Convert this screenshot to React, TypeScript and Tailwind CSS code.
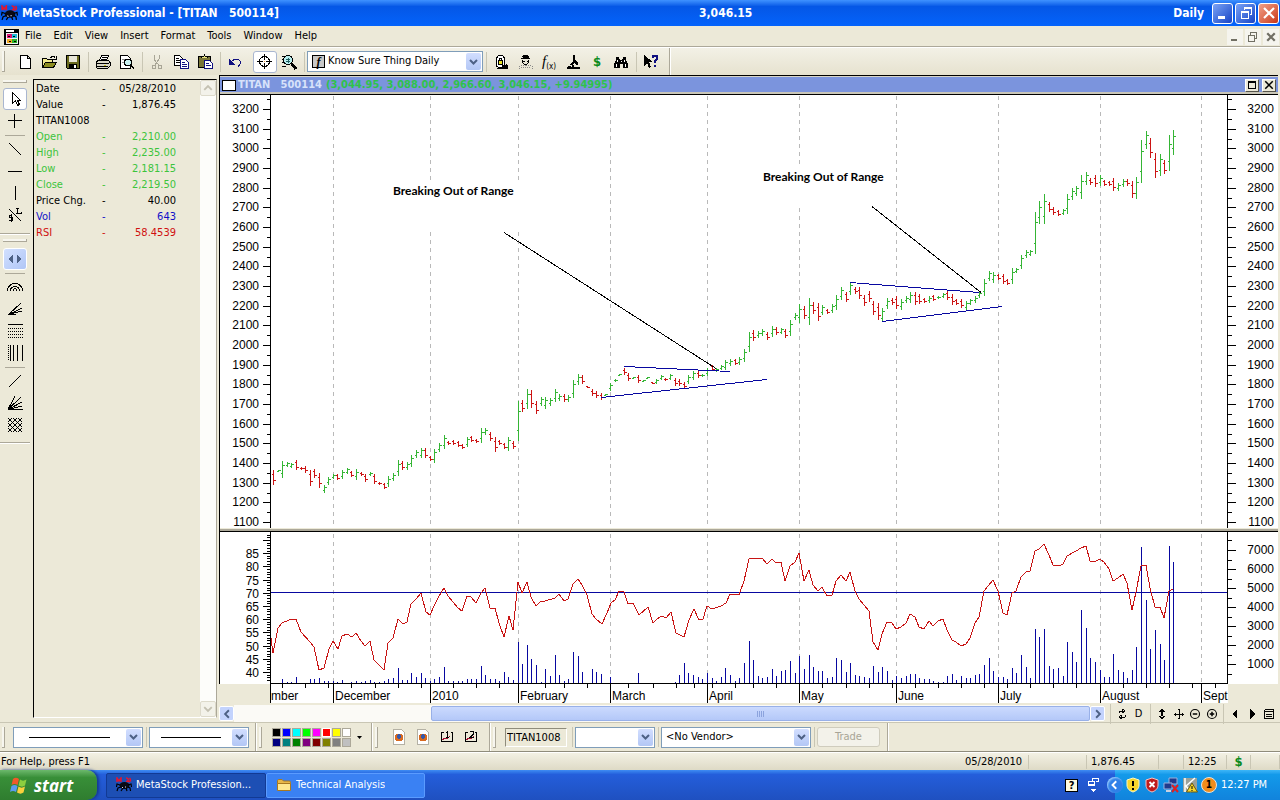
import React from "react";
import clsx from "clsx";

// [x, high, low, up]
const BARS = [
  [273, 470, 484, 0], [278, 470, 471, 1], [282, 461, 477, 1], [287, 462, 466, 1], [291, 463, 467, 1],
  [296, 460, 469, 0], [301, 467, 469, 0], [305, 466, 472, 0], [310, 470, 485, 0], [314, 469, 477, 0],
  [319, 473, 487, 0], [324, 485, 492, 1], [328, 477, 484, 1], [333, 474, 478, 1], [337, 474, 479, 0],
  [342, 470, 478, 1], [347, 468, 473, 1], [351, 471, 476, 0], [356, 469, 479, 1], [361, 472, 475, 0],
  [365, 474, 481, 0], [370, 472, 475, 1], [374, 474, 483, 0], [379, 482, 484, 0], [384, 483, 488, 0],
  [388, 476, 486, 1], [393, 473, 480, 1], [398, 460, 475, 1], [402, 461, 469, 0], [407, 462, 469, 1],
  [411, 455, 466, 1], [416, 450, 457, 1], [421, 448, 457, 1], [425, 448, 457, 0], [430, 456, 460, 0],
  [434, 449, 462, 1], [439, 443, 451, 1], [444, 435, 448, 1], [448, 441, 444, 0], [453, 440, 444, 0],
  [458, 441, 446, 0], [462, 444, 448, 0], [467, 437, 446, 1], [471, 436, 441, 0], [476, 439, 442, 0],
  [481, 428, 442, 1], [485, 428, 434, 1], [490, 432, 440, 0], [495, 437, 451, 0], [499, 440, 444, 0],
  [504, 443, 448, 0], [508, 437, 450, 1], [513, 441, 448, 0], [518, 401, 440, 1], [522, 400, 411, 0],
  [527, 389, 408, 1], [531, 390, 407, 0], [536, 401, 413, 0], [541, 397, 405, 1], [545, 397, 408, 1],
  [550, 398, 405, 1], [555, 389, 401, 1], [559, 394, 400, 1], [564, 394, 401, 0], [568, 395, 401, 1],
  [573, 380, 397, 1], [578, 374, 384, 1], [582, 375, 383, 0], [587, 386, 387, 0], [592, 389, 395, 0],
  [596, 391, 397, 0], [601, 393, 399, 0], [605, 394, 395, 1], [610, 383, 390, 1], [615, 379, 381, 1],
  [619, 374, 375, 1], [624, 368, 374, 0], [628, 373, 380, 0], [633, 377, 378, 1], [638, 375, 382, 0],
  [643, 380, 381, 1], [647, 377, 378, 1], [652, 382, 383, 0], [656, 379, 383, 1], [661, 375, 379, 1],
  [665, 378, 380, 0], [670, 374, 379, 1], [675, 378, 385, 0], [679, 379, 385, 0], [684, 382, 388, 0],
  [688, 375, 383, 1], [693, 371, 379, 1], [698, 371, 377, 0], [702, 374, 376, 1], [707, 368, 375, 1],
  [712, 365, 370, 0], [716, 368, 371, 1], [721, 365, 369, 1], [725, 360, 369, 1], [730, 359, 365, 1],
  [735, 359, 364, 0], [739, 357, 364, 1], [744, 349, 361, 1], [749, 332, 351, 1], [753, 330, 340, 0],
  [758, 331, 337, 1], [762, 329, 335, 1], [767, 332, 339, 0], [772, 326, 336, 1], [776, 327, 334, 0],
  [781, 328, 333, 1], [785, 329, 337, 0], [790, 320, 335, 1], [795, 313, 319, 1], [799, 304, 322, 1],
  [804, 306, 318, 0], [809, 298, 324, 1], [813, 302, 313, 0], [818, 303, 320, 0], [822, 305, 314, 1],
  [827, 309, 313, 0], [832, 304, 312, 1], [836, 295, 309, 1], [841, 287, 299, 1], [846, 292, 301, 0],
  [850, 282, 294, 1], [855, 287, 293, 0], [859, 287, 298, 0], [864, 295, 305, 0], [869, 291, 301, 0],
  [873, 301, 314, 0], [878, 303, 319, 0], [882, 308, 321, 1], [887, 298, 308, 1], [892, 298, 304, 0],
  [896, 296, 308, 0], [901, 299, 309, 1], [906, 296, 302, 1], [910, 292, 302, 1], [915, 292, 304, 0],
  [919, 294, 303, 0], [924, 298, 302, 0], [929, 296, 302, 1], [933, 295, 300, 0], [938, 296, 298, 1],
  [943, 293, 297, 1], [947, 291, 299, 0], [952, 294, 304, 0], [956, 299, 304, 0], [961, 299, 307, 0],
  [966, 301, 309, 1], [970, 299, 304, 1], [975, 296, 302, 1], [979, 291, 297, 1], [984, 279, 295, 1],
  [989, 271, 280, 1], [993, 272, 282, 1], [998, 274, 279, 0], [1003, 274, 283, 0], [1007, 279, 284, 0],
  [1012, 268, 283, 1], [1016, 268, 272, 1], [1021, 255, 268, 1], [1026, 250, 257, 1], [1030, 250, 255, 1],
  [1035, 212, 253, 1], [1039, 201, 223, 1], [1044, 194, 223, 1], [1049, 202, 211, 0], [1053, 207, 214, 0],
  [1058, 210, 215, 0], [1063, 209, 214, 1], [1067, 194, 213, 1], [1072, 188, 199, 1], [1076, 186, 195, 1],
  [1081, 175, 198, 1], [1086, 172, 184, 1], [1090, 178, 184, 0], [1095, 175, 186, 0], [1100, 175, 185, 1],
  [1104, 180, 185, 0], [1109, 181, 185, 0], [1113, 178, 190, 0], [1118, 183, 190, 1], [1123, 179, 186, 1],
  [1127, 179, 185, 0], [1132, 181, 197, 0], [1136, 177, 198, 1], [1141, 140, 182, 1], [1146, 131, 148, 1],
  [1150, 138, 157, 0], [1155, 153, 177, 0], [1160, 154, 175, 1], [1164, 160, 173, 0], [1169, 135, 170, 1],
  [1173, 130, 154, 1],
];

const RSI =
  "271,638 273,653 278,628 282,623 289,620 296,619 301,632 310,642 314,647 319,670 324,668 329,649 333,641 338,649 342,636 347,634 352,637 356,633 361,641 365,646 370,641 374,660 384,670 388,643 393,638 398,619 403,624 407,622 411,604 416,599 421,593 426,612 430,615 435,604 439,596 444,588 448,596 453,602 458,608 462,611 467,596 471,597 476,603 481,593 485,588 490,608 495,608 499,623 504,637 509,616 513,630 518,582 522,593 527,582 531,597 536,606 541,601 545,601 555,598 559,594 564,601 568,599 573,584 578,579 582,585 587,595 592,614 596,619 602,624 607,613 611,603 615,600 619,591 624,592 628,604 633,603 639,615 648,607 653,623 657,619 662,616 666,618 671,612 676,633 684,637 689,620 694,609 699,620 703,619 707,606 712,609 721,606 726,603 730,594 739,595 744,581 749,559 762,558 767,564 772,559 776,563 781,562 785,581 790,566 795,562 799,553 804,581 809,570 813,585 818,591 822,587 827,596 832,595 836,581 841,575 846,581 850,572 855,591 859,599 864,605 869,611 873,642 878,650 882,634 887,622 892,623 896,629 901,627 906,623 910,614 915,617 919,627 924,629 929,621 933,626 938,621 943,619 947,630 952,640 956,642 961,646 966,644 970,638 975,623 979,617 984,591 993,580 998,591 1003,613 1007,615 1012,593 1016,591 1021,577 1026,572 1030,571 1035,551 1039,549 1044,544 1049,555 1053,565 1061,565 1063,564 1067,556 1076,551 1081,548 1086,546 1090,561 1094,562 1100,559 1104,562 1109,569 1113,581 1118,578 1123,574 1127,583 1132,610 1136,592 1141,566 1146,565 1150,588 1155,607 1160,607 1164,618 1169,591 1173,589";

// [x, height]
const VOLUME = [
  [282, 4], [287, 1], [291, 1], [296, 6], [310, 4], [314, 4], [319, 5], [324, 2], [328, 2], [333, 2],
  [337, 1], [342, 3], [351, 1], [356, 2], [361, 1], [365, 2], [370, 3], [374, 1], [379, 1], [384, 2],
  [388, 4], [393, 5], [398, 15], [402, 3], [407, 3], [411, 10], [416, 6], [421, 10], [425, 5], [430, 2],
  [434, 4], [439, 6], [444, 16], [448, 2], [453, 2], [458, 2], [462, 2], [467, 4], [471, 4], [476, 4],
  [481, 17], [485, 8], [490, 4], [495, 4], [499, 2], [504, 11], [508, 6], [513, 3], [518, 41], [522, 19],
  [527, 38], [531, 24], [536, 18], [541, 1], [545, 14], [550, 7], [555, 28], [559, 8], [564, 2], [568, 4],
  [573, 31], [578, 27], [582, 11], [592, 14], [596, 11], [601, 9], [610, 6], [638, 10], [675, 1], [679, 8],
  [684, 20], [688, 10], [693, 8], [698, 6], [702, 4], [707, 10], [712, 5], [716, 2], [721, 6], [725, 15],
  [730, 8], [735, 2], [739, 5], [744, 20], [749, 42], [753, 23], [758, 7], [762, 5], [767, 6], [772, 14],
  [776, 7], [781, 12], [785, 13], [790, 22], [795, 10], [799, 27], [804, 14], [809, 28], [813, 16],
  [818, 12], [822, 12], [827, 5], [832, 6], [836, 25], [841, 23], [846, 11], [850, 20], [855, 8], [859, 7],
  [864, 6], [869, 5], [873, 17], [878, 11], [882, 16], [887, 12], [892, 3], [896, 7], [901, 5], [906, 7],
  [910, 9], [915, 9], [919, 5], [924, 4], [929, 4], [933, 2], [938, 1], [943, 1], [947, 7], [952, 9],
  [956, 3], [961, 7], [966, 5], [970, 5], [975, 8], [979, 9], [984, 18], [989, 25], [993, 12], [998, 6],
  [1003, 6], [1007, 4], [1012, 15], [1016, 10], [1021, 28], [1026, 16], [1030, 5], [1035, 54], [1039, 46],
  [1044, 54], [1049, 17], [1053, 14], [1058, 15], [1063, 7], [1067, 41], [1072, 31], [1076, 21],
  [1081, 73], [1086, 55], [1090, 25], [1095, 21], [1100, 13], [1104, 6], [1109, 6], [1113, 29], [1118, 13],
  [1123, 11], [1127, 5], [1132, 13], [1136, 36], [1141, 136], [1146, 83], [1150, 34], [1155, 53],
  [1160, 39], [1164, 23], [1169, 137], [1173, 121],
];

const MONTHS: [number, string][] = [
  [333, "December"], [430, "2010"], [518, "February"], [610, "March"], [707, "April"],
  [799, "May"], [896, "June"], [998, "July"], [1100, "August"], [1201, "Sept"],
];

const WEEKS = [
  282, 305, 328, 351, 375, 398, 421, 453, 476, 499, 545, 564, 587, 628, 653, 676, 694, 712, 735, 753, 776,
  822, 846, 869, 892, 915, 938, 961, 984, 1007, 1030, 1053, 1076, 1123, 1146, 1169, 1192, 1215,
];

const QUOTES = [
  ["Date", "05/28/2010", "text-black"],
  ["Value", "1,876.45", "text-black"],
  ["TITAN1008", "", "text-black"],
  ["Open", "2,210.00", "text-[#3cc43c]"],
  ["High", "2,235.00", "text-[#3cc43c]"],
  ["Low", "2,181.15", "text-[#3cc43c]"],
  ["Close", "2,219.50", "text-[#3cc43c]"],
  ["Price Chg.", "40.00", "text-black"],
  ["Vol", "643", "text-[#1010c8]"],
  ["RSI", "58.4539", "text-[#d01010]"],
];

const SWATCHES = [
  "bg-[#000000]", "bg-[#0000ff]", "bg-[#00ffff]", "bg-[#00ff00]", "bg-[#ff00ff]", "bg-[#ff0000]", "bg-[#ffff00]", "bg-[#ffffff]",
  "bg-[#000080]", "bg-[#008080]", "bg-[#008000]", "bg-[#800080]", "bg-[#800000]", "bg-[#808000]", "bg-[#808080]", "bg-[#c0c0c0]",
];

const priceY = (price: number) => Math.round(522 - ((price - 1100) * 413) / 2100);
const rsiY = (value: number) => Math.round(672 - (value - 40) * 2.64);
const volY = (value: number) => Math.round(683 - (value * 19) / 1000);

const PRICES = Array.from({ length: 22 }, (_, i) => 1100 + i * 100);

type IconProps = { children: React.ReactNode; size?: number; smooth?: boolean };

const Icon = ({ children, size = 16, smooth }: IconProps) => (
  <svg
    width={size}
    height={size}
    viewBox="0 0 16 16"
    fill="none"
    stroke="#000"
    shapeRendering={smooth ? "auto" : "crispEdges"}
    className="shrink-0"
    aria-hidden="true"
  >
    {children}
  </svg>
);

const ToolButton = ({ label, children, className = "" }: { label: string; children: React.ReactNode; className?: string }) => (
  <button aria-label={label} className={clsx("flex h-[22px] w-6 shrink-0 items-center justify-center rounded-[3px]", className)}>
    {children}
  </button>
);

const Sep = () => (
  <span className="flex h-5 w-[6px] shrink-0 justify-center">
    <span className="w-px bg-[#c9c6b4]" />
  </span>
);

const Grip = () => <span className="h-[21px] w-[3px] shrink-0 border-r border-b border-[#aca899] bg-[#f7f6ef]" />;

const BandEnd = () => <span className="w-[2px] shrink-0 self-stretch border-r border-white bg-[#aca899]" />;

const Arrow = () => (
  <span className="pointer-events-none absolute top-px right-px bottom-px flex w-[15px] items-center justify-center rounded-[2px] bg-linear-to-b from-[#d2deff] to-[#b3c7f5]">
    <svg width="9" height="6" viewBox="0 0 9 6" fill="none" stroke="#4d6185" strokeWidth="2" aria-hidden="true">
      <path d="M1 1l3.5 3.5L8 1" />
    </svg>
  </span>
);

const Combo = ({ label, value, className = "", children, selectClass = "pl-1" }: { label: string; value: string; className?: string; children?: React.ReactNode; selectClass?: string }) => (
  <div className={clsx("relative h-[21px] shrink-0 border border-[#7f9db9] bg-white", className)}>
    <select aria-label={label} className={clsx("block h-full w-full appearance-none bg-transparent pr-4", selectClass)}>
      <option>{value}</option>
    </select>
    {children}
    <Arrow />
  </div>
);

const Spider = ({ size = 17 }: { size?: number }) => (
  <Icon size={size} smooth>
    <path d="M1 5V1l2 3 2-3v4M10 4.500c3 0 3-3.500 0-3.500M12 4.500c3 .500 3-2 1.500-3.500" stroke="#e01830" strokeWidth="1.500" />
    <ellipse cx="8.500" cy="8.500" rx="5" ry="3.500" fill="#0a0a14" stroke="none" />
    <path d="M4 8L1 7l-.500 3M5 10l-3 1-1 3M12 8l3-1 .500 3M12 10l2 1 .500 3M7 11l-2 3M10 11l1 3" strokeWidth="1.200" />
    <path d="M6 10l1 1M9 10h1" stroke="#d8d8e8" />
  </Icon>
);

const TitleBar = () => (
  <header className="flex h-[26px] shrink-0 items-center bg-linear-to-b from-[#3f92ff] via-[#0557e6] via-25% to-[#0463fb] pr-px pl-px font-['DejaVu_Sans_Condensed',sans-serif] text-[12px] font-bold text-white">
    <div className="flex w-[698px] min-w-0 shrink items-center gap-1">
      <Spider />
      <h1 className="whitespace-pre">MetaStock Professional - [TITAN   500114]</h1>
    </div>
    <span>3,046.15</span>
    <span className="mr-2 ml-auto">Daily</span>
    <div className="flex gap-[2px]">
      <button aria-label="Minimize" className="flex size-[21px] items-center justify-center rounded-[3px] border border-white bg-linear-to-br from-[#7ba2f5] to-[#1941c5]">
        <Icon><path d="M3 11h7v3H3z" fill="#fff" stroke="none" /></Icon>
      </button>
      <button aria-label="Restore" className="flex size-[21px] items-center justify-center rounded-[3px] border border-white bg-linear-to-br from-[#7ba2f5] to-[#1941c5]">
        <Icon><path d="M3.500 6.500h7v7h-7zM3.500 7.500h7M6 5V2.500h7.500v7H12M6 3.500h7" stroke="#fff" /></Icon>
      </button>
      <button aria-label="Close" className="flex size-[21px] items-center justify-center rounded-[3px] border border-white bg-linear-to-br from-[#f0a088] to-[#c8320e]">
        <Icon smooth><path d="M3 3l10 10M13 3L3 13" stroke="#fff" strokeWidth="2.200" /></Icon>
      </button>
    </div>
  </header>
);

const MenuBar = () => (
  <nav className="flex h-[22px] shrink-0 items-center border-b border-white pl-1 shadow-[inset_0_-1px_0_#aca899]">
    <Icon>
      <path d="M0 0h15v16H0z" fill="#000" stroke="none" />
      <path d="M2 1h8v2H2z" fill="#fff" stroke="none" />
      <path d="M2 4h12v11H2z" fill="#f0f0f0" stroke="none" />
      <path d="M3 5h5v4H3z" fill="#e01070" stroke="none" />
      <path d="M8 5h5v4H8z" fill="#20b8d8" stroke="none" />
      <path d="M3 10h5v4H3z" fill="#f0a820" stroke="none" />
      <path d="M8 10h5v4H8z" fill="#28b428" stroke="none" />
      <path d="M4 7.500h2M9 7.500h2M5 12.500h2M10 12.500h2" />
    </Icon>
    <ul className="flex">
      {["File", "Edit", "View", "Insert", "Format", "Tools", "Window", "Help"].map((item) => (
        <li key={item}>
          <button className="pr-[7px] pl-[5px]">{item}</button>
        </li>
      ))}
    </ul>
    <div className="mr-px ml-auto flex gap-[2px]">
      <button aria-label="Minimize chart" className="flex h-4 w-4 items-center justify-center bg-[#f5f4ee]">
        <Icon size={12}><path d="M3 12h7" stroke="#716f64" strokeWidth="2" /></Icon>
      </button>
      <button aria-label="Restore chart" className="flex h-4 w-4 items-center justify-center bg-[#f5f4ee]">
        <Icon size={12}><path d="M2 6.500h8v7H2zM5 5V2.500h8v7h-2" stroke="#716f64" strokeWidth="1.500" /></Icon>
      </button>
      <button aria-label="Close chart" className="flex h-4 w-4 items-center justify-center bg-[#f5f4ee]">
        <Icon size={12} smooth><path d="M3 3l10 10M13 3L3 13" stroke="#716f64" strokeWidth="3" /></Icon>
      </button>
    </div>
  </nav>
);

const StandardBar = () => (
  <div className="flex h-[27px] shrink-0 items-center bg-linear-to-b from-[#f3f1e6] to-[#e6e2cf] pl-[2px]">
    <Grip />
    <span className="w-2 shrink-0" />
    <ToolButton label="New">
      <Icon><path d="M3.500 1.500h7l3 3v10h-10zM10.500 1.500v3h3" fill="#fff" /></Icon>
    </ToolButton>
    <ToolButton label="Open">
      <Icon>
        <path d="M1.500 13.500v-9h4l1 1h5v3" fill="#f0e890" />
        <path d="M1.500 13.500l3-5h11l-3 5z" fill="#8c8c20" />
        <path d="M9 3.500h1l1-1h2l1.500 2M15 2v3h-3" />
      </Icon>
    </ToolButton>
    <ToolButton label="Save">
      <Icon>
        <path d="M1.500 1.500h13v13h-12l-1-1z" fill="#6b6b20" />
        <path d="M4 2h8v6H4z" fill="#e8e6d8" stroke="none" />
        <path d="M4 10h8v4H4z" fill="#000" stroke="none" />
        <path d="M9 11h2v3H9z" fill="#fff" stroke="none" />
      </Icon>
    </ToolButton>
    <Sep />
    <ToolButton label="Print">
      <Icon>
        <path d="M4.500 6.500l2-5h7l-2 5" fill="#fff" />
        <path d="M7 3.500h5M6 5.500h5" />
        <path d="M1.500 7.500l2-1h10l1.500 1.500v4l-2 2h-11l-1-1z" fill="#dad7c8" />
        <path d="M2 9.500h11M2 12.500h11M13 9.500l2-1" />
        <path d="M3 14.500h10" />
        <path d="M9 11h2" stroke="#c8c020" />
      </Icon>
    </ToolButton>
    <ToolButton label="Print preview">
      <Icon>
        <path d="M1.500 1.500h7l3 3v10h-10z" fill="#fff" />
        <path d="M3 5.500h3M3 8.500h2" stroke="#888" />
        <circle cx="9" cy="8.500" r="3.500" fill="#c8f0f0" />
        <path d="M11.500 11l3.500 3.500" strokeWidth="2" />
      </Icon>
    </ToolButton>
    <Sep />
    <ToolButton label="Cut">
      <Icon>
        <g stroke="#a8a596">
          <path d="M5 1v4l2.500 4L10 5V1M7.500 9L6 11M7.500 9L10 11" />
          <circle cx="5" cy="13" r="2" />
          <circle cx="11" cy="13" r="2" />
        </g>
      </Icon>
    </ToolButton>
    <ToolButton label="Copy">
      <Icon>
        <path d="M1.500 1.500h5l3 3v7h-8z" fill="#fff" />
        <path d="M3 4.500h3M3 6.500h4M3 8.500h4" />
        <path d="M7.500 5.500h5l3 3v6h-8z" fill="#fff" stroke="#101080" />
        <path d="M9 8.500h3M9 10.500h5M9 12.500h5" stroke="#101080" />
      </Icon>
    </ToolButton>
    <ToolButton label="Paste">
      <Icon>
        <path d="M1.500 2.500h12v11h-12z" fill="#7a7638" />
        <path d="M4.500 3.500v-1h2l1-1.500 1 1.500h2v1" fill="#e8e480" />
        <path d="M7.500 6.500h5l3 3v5h-8z" fill="#fff" stroke="#101080" />
        <path d="M9 9.500h3M9 11.500h5" stroke="#101080" />
      </Icon>
    </ToolButton>
    <Sep />
    <ToolButton label="Undo">
      <Icon>
        <path d="M3.500 9.500C6 4 13 4 13.500 8.500c0 2-1 3-2.500 4" stroke="#101080" />
        <path d="M2 5v6h6z" fill="#101080" stroke="none" />
      </Icon>
    </ToolButton>
    <span className="w-[6px] shrink-0" />
    <ToolButton label="Crosshair" className="border border-[#a9b6d0] bg-white">
      <Icon>
        <circle cx="7.500" cy="7.500" r="5" />
        <path d="M7.500 0v6M7.500 9v6M0 7.500h6M9 7.500h6" />
        <path d="M7.500 7v1" stroke="#f0a040" />
      </Icon>
    </ToolButton>
    <ToolButton label="Zoom">
      <Icon>
        <circle cx="7" cy="6" r="4.500" fill="#b8ecec" />
        <path d="M1 2.500h3M1 5.500h2M1 8.500h3M1 12.500h4" />
        <path d="M5 5.500h4M5 7.500h4M7 4v5" stroke="#206060" />
        <path d="M10.500 10l4.500 5" strokeWidth="3" />
      </Icon>
    </ToolButton>
    <Sep />
    <Combo label="Indicator" value="Know Sure Thing Daily" className="w-[176px]" selectClass="pl-5">
      <span className="pointer-events-none absolute top-[3px] left-1 flex h-[13px] w-[13px] items-center justify-center border border-black bg-[#c8c8c8] font-['Liberation_Serif',serif] text-[12px] leading-none font-bold italic">
        f
      </span>
    </Combo>
    <Sep />
    <ToolButton label="Expert advisor">
      <Icon>
        <path d="M3.500 12V4l2-2.500h4l2 2.500v8l-2 1.500h-4z" fill="#fff" />
        <path d="M5.500 6.500h4v4h-4z" fill="#e8e020" />
        <path d="M6.500 6V4h2v2" />
        <path d="M9 11h4v-1l2 2v3H8z" fill="#000" stroke="none" />
        <path d="M4 14.500h5" />
      </Icon>
    </ToolButton>
    <ToolButton label="Explorer">
      <Icon>
        <path d="M4 4.500h9M5.500 3.500l1-2h4l1 2" fill="#000" />
        <path d="M5.500 5.500v3l2 2h2l2-2v-3" fill="#e8e6d8" />
        <path d="M6 7.500h2M10 7.500h1" />
        <path d="M2 15l1-3 4-1 2 1 2-1 4 1v3" stroke="#888" strokeDasharray="1 1" />
        <path d="M4 13.500h10" stroke="#888" strokeDasharray="1 1" />
      </Icon>
    </ToolButton>
    <ToolButton label="Indicator builder">
      <span className="font-['Liberation_Serif',serif] text-[15px] leading-none italic">f</span>
      <span className="self-end text-[8px] leading-[13px]">(x)</span>
    </ToolButton>
    <ToolButton label="System tester">
      <Icon>
        <path d="M8 1h2v5l3 3v2h-2L9 9 7 11H4l4-4z" fill="#000" stroke="none" />
        <path d="M2 14h13M8 11v3" strokeWidth="2" />
        <path d="M3 12.500h3" />
      </Icon>
    </ToolButton>
    <ToolButton label="Option scope">
      <span className="text-[13px] font-bold text-[#0c8a1c]">$</span>
    </ToolButton>
    <ToolButton label="Find">
      <Icon>
        <path d="M3 3h3v2h1v1h2V5h1V3h3v3l2 4v4h-5v-4H8v4H1v-4l2-4z" fill="#000" stroke="none" />
        <path d="M4.500 6v2M11.500 6v2M3.500 10v3M12.500 10v3M7.500 7.500h1" stroke="#fff" />
        <path d="M7 10h2v5H7z" fill="#ece9d8" stroke="none" />
      </Icon>
    </ToolButton>
    <Sep />
    <ToolButton label="Context help">
      <Icon>
        <path d="M1 1v11l3-3 2 5 2-1-2-5h4z" fill="#000" stroke="none" />
        <path d="M10 4V2h4v3l-2 2v2M11 12h2" stroke="#101080" strokeWidth="2" />
      </Icon>
    </ToolButton>
    <span className="w-[6px] shrink-0" />
    <BandEnd />
  </div>
);

const HGrip = () => <span className="h-[3px] w-6 border-r border-b border-[#aca899] bg-[#f7f6ef]" />;
const HSep = () => (
  <span className="flex h-[6px] w-5 items-center">
    <span className="h-px w-full bg-[#aca899]" />
  </span>
);

const LeftTools = () => (
  <aside className="flex w-[33px] shrink-0 flex-col items-center pr-1">
    <span className="flex h-[13px] items-center"><HGrip /></span>
    <ToolButton label="Select" className="border border-[#a9b6d0] bg-white">
      <Icon><path d="M5.500 1.500v11l3-3 2 5 2-1-2-4h3z" fill="#fff" /></Icon>
    </ToolButton>
    <ToolButton label="Cross"><Icon><path d="M7.500 1v14M1 7.500h14" /></Icon></ToolButton>
    <HSep />
    <ToolButton label="Trendline down"><Icon><path d="M2 2l12 12" /></Icon></ToolButton>
    <ToolButton label="Horizontal line"><Icon><path d="M1 8.500h14" /></Icon></ToolButton>
    <ToolButton label="Vertical line"><Icon><path d="M8.500 1v14" /></Icon></ToolButton>
    <ToolButton label="Stop or limit order">
      <Icon>
        <path d="M2 2l12 12M10.500 1v5M9 1.500h3M9 6.500h5v-2" />
        <path d="M5 8.500H2.500v2H5v3H2M4.500 7v8" />
      </Icon>
    </ToolButton>
    <span className="flex h-[22px] w-[31px] flex-col items-center pt-[7px]">
      <span className="mb-1 h-[2px] w-full shrink-0 border-b border-white bg-[#aca899]" />
      <HGrip />
    </span>
    <ToolButton label="Scroll studies" className="border border-white bg-linear-to-br from-[#d2e0ff] to-[#b0c6f6]">
      <Icon><path d="M6 3.500v9L1.500 8zM10 3.500v9L14.500 8z" fill="#4d6185" stroke="none" /></Icon>
    </ToolButton>
    <HSep />
    <ToolButton label="Fibonacci arcs">
      <Icon><path d="M.5 12c0-10 15-10 15 0M3.500 12c0-6 9-6 9 0M6 12c0-3 4-3 4 0" /></Icon>
    </ToolButton>
    <ToolButton label="Fibonacci fan"><Icon><path d="M1.500 13.500L14 2M1.500 13.500L15 7M1.500 13.500L15 10M1 13.500h8" /></Icon></ToolButton>
    <ToolButton label="Fibonacci retracement">
      <Icon>
        <path d="M1 1.500h15" />
        <path d="M1 5.500h15M1 8.500h15M1 11.500h15M1 14.500h15" strokeDasharray="1 1" />
      </Icon>
    </ToolButton>
    <ToolButton label="Fibonacci time zones">
      <Icon>
        <path d="M1.500 0v16" strokeDasharray="1 1" />
        <path d="M3.500 0v16M6.500 0v16M10.500 0v16M15.500 0v16" />
      </Icon>
    </ToolButton>
    <HSep />
    <ToolButton label="Gann line"><Icon><path d="M2 14L14 2" /></Icon></ToolButton>
    <ToolButton label="Gann fan"><Icon><path d="M1 14.500L8 1M1 14.500L14 2M1 14.500L15 7M1 14.500L15 11M1 14.500h15" /></Icon></ToolButton>
    <ToolButton label="Gann grid">
      <Icon><path d="M1 5l4-4M1 10l9-9M1 15L15 1M6 15l9-9M11 15l4-4M11 1l4 4M6 1l9 9M1 1l14 14M1 6l9 9M1 11l4 4" /></Icon>
    </ToolButton>
    <span className="mt-[6px] h-[2px] w-[31px] border-b border-white bg-[#aca899]" />
  </aside>
);

const DataWindow = () => (
  <section aria-label="Data window" className="mt-1 mr-[2px] mb-1 flex w-[184px] shrink-0 border-t border-r border-b border-l border-t-black border-r-[#aca899] border-b-white border-l-black">
    <div className="flex-1 pt-px pl-[2px]">
      <table className="w-[140px]">
        <tbody>
          {QUOTES.map(([name, value, color]) => (
            <tr key={name} className={clsx("h-4 leading-4", color)}>
              <td className="w-[66px] p-0 whitespace-nowrap">{name}</td>
              <td className="w-2 p-0">{value && "-"}</td>
              <td className="p-0 text-right">{value}</td>
            </tr>
          ))}
        </tbody>
      </table>
    </div>
    <div className="flex w-[16px] flex-col justify-between bg-[#fdfdfa]">
      <button aria-label="Scroll up" className="flex h-4 items-center justify-center rounded-[2px] border border-[#dddacb] bg-[#f3f2ea]">
        <Icon size={10} smooth><path d="M2 11l6-6 6 6" stroke="#c4c1b2" strokeWidth="3" /></Icon>
      </button>
      <button aria-label="Scroll down" className="flex h-4 items-center justify-center rounded-[2px] border border-[#dddacb] bg-[#f3f2ea]">
        <Icon size={10} smooth><path d="M2 5l6 6 6-6" stroke="#c4c1b2" strokeWidth="3" /></Icon>
      </button>
    </div>
  </section>
);

const GridLines = ({ top, bottom }: { top: number; bottom: number }) => (
  <g stroke="#b9b9b9" strokeDasharray="4 4">
    {MONTHS.map(([x]) => (
      <path key={x} d={`M${x + 0.5} ${top}V${bottom}`} />
    ))}
  </g>
);

const axisText = "font-['Liberation_Sans',sans-serif] text-[12px]";

const PriceAxis = ({ side }: { side: "left" | "right" }) => {
  const left = side === "left";
  const line = left ? 270 : 1227;
  const dir = left ? -1 : 1;
  return (
    <svg viewBox={left ? "220 95 51 433" : "1227 95 51 433"} preserveAspectRatio="none" className="h-full w-full overflow-visible bg-white">
      <g stroke="#000" shapeRendering="crispEdges">
        <path d={`M${line + 0.5} 95V528`} />
        {PRICES.map((price) => (
          <path key={price} d={`M${line + 0.5} ${priceY(price) + 0.5}h${8 * dir}M${line + 0.5} ${priceY(price + 50) + 0.5}h${4 * dir}`} />
        ))}
      </g>
      <g className={axisText} textAnchor="end">
        {PRICES.map((price) => (
          <text key={price} x={left ? 259 : 1274} y={priceY(price) + 4}>{price}</text>
        ))}
      </g>
    </svg>
  );
};

const PricePlot = () => (
  <svg viewBox="271 95 956 433" preserveAspectRatio="none" className="h-full w-full bg-white" shapeRendering="crispEdges" fill="none">
    <GridLines top={96} bottom={528} />
    <path d="M390 181h135v48H390zM760 165h132v40H760z" fill="#fff" />
    {BARS.map(([x, high, low, up]) => {
      const tick = Math.round((low - high) / 4);
      const open = up ? low - tick : high + tick;
      const close = up ? high + tick : low - tick;
      return (
        <path
          key={x}
          d={`M${x + 0.5} ${high}V${low + 1}M${x - 1} ${open + 0.5}h2M${x} ${close + 0.5}h3`}
          stroke={up ? "#35b535" : "#cc1414"}
        />
      );
    })}
    <path d="M624 366.500L730 371.500M601 397.500L767 379.500M850 282.500L979 292.500M882 321.500L1002 306.500" stroke="#0808a0" />
    <path d="M504 232.500L716 368.500M872 206.500L981 292.500" stroke="#000" />
    <g fill="#000" className="font-['Lato',sans-serif] text-[12px] font-bold">
      <text x="393" y="195">Breaking Out of Range</text>
      <text x="763" y="181">Breaking Out of Range</text>
    </g>
  </svg>
);

const RsiAxis = () => (
  <svg viewBox="220 532 51 152" preserveAspectRatio="none" className="h-full w-full bg-white">
    <g stroke="#000" shapeRendering="crispEdges">
      <path d="M270.500 532V684" />
      {Array.from({ length: 56 }, (_, i) => 37 + i).map((value) => (
        <path key={value} d={`M270.500 ${rsiY(value) + 0.5}h${value % 5 ? -4 : -8}`} />
      ))}
    </g>
    <g className={axisText} textAnchor="end">
      {Array.from({ length: 10 }, (_, i) => 40 + i * 5).map((value) => (
        <text key={value} x="259" y={rsiY(value) + 5}>{value}</text>
      ))}
    </g>
  </svg>
);

const RsiPlot = () => (
  <svg viewBox="271 532 956 152" preserveAspectRatio="none" className="h-full w-full bg-white" shapeRendering="crispEdges" fill="none">
    <GridLines top={534} bottom={683} />
    <path d="M271 592.500H1227" stroke="#0808a0" />
    <g stroke="#0808a0">
      {VOLUME.map(([x, height]) => (
        <path key={x} d={`M${x + 0.5} ${683 - height}V683`} />
      ))}
    </g>
    <polyline points={RSI} stroke="#c81414" />
    <path d="M271 683.500H1227" stroke="#000" />
  </svg>
);

const VolumeAxis = () => (
  <svg viewBox="1227 532 51 152" preserveAspectRatio="none" className="h-full w-full bg-white">
    <g stroke="#000" shapeRendering="crispEdges">
      <path d="M1227.500 532V684" />
      {[1, 2, 3, 4, 5, 6, 7].map((k) => (
        <path key={k} d={`M1227.500 ${volY(k * 1000) + 0.5}h8M1227.500 ${volY(k * 1000 - 500) + 0.5}h4`} />
      ))}
      <path d="M1227.500 540.500h4" />
    </g>
    <g className={axisText} textAnchor="end">
      {[1, 2, 3, 4, 5, 6, 7].map((k) => (
        <text key={k} x="1274" y={volY(k * 1000) + 4}>{k * 1000}</text>
      ))}
    </g>
  </svg>
);

const DateAxis = () => (
  <svg viewBox="270 684 958 21" preserveAspectRatio="none" className="h-full w-full bg-[#ece9d8]">
    <path d="M270 684h958v19H270z" fill="#fff" />
    <g stroke="#000" shapeRendering="crispEdges">
      <path d="M270.500 684v19" />
      {MONTHS.map(([x]) => (
        <path key={x} d={`M${x + 0.5} 684v19`} />
      ))}
      {WEEKS.map((x) => (
        <path key={x} d={`M${x + 0.5} 684v4`} />
      ))}
    </g>
    <g className={axisText}>
      <text x="271" y="700">mber</text>
      {MONTHS.map(([x, name]) => (
        <text key={x} x={x + 2} y="700">{name}</text>
      ))}
    </g>
  </svg>
);

const ScrollRow = () => (
  <div className="flex h-[17px] shrink-0 items-center">
    <button aria-label="Scroll left" className="flex h-[15px] w-[15px] shrink-0 items-center justify-center rounded-[2px] border border-white bg-[#c3d3fd]">
      <Icon size={10} smooth><path d="M11 2L5 8l6 6" stroke="#4d6185" strokeWidth="3" /></Icon>
    </button>
    <div className="flex h-full min-w-0 flex-1 items-center bg-[#fbfaf6]">
      <div className="ml-auto flex h-[15px] w-[77%] items-center justify-center gap-px rounded-[2px] border border-[#98b0e8] bg-linear-to-b from-[#cbdafe] to-[#b4c8f8]">
        {[0, 1, 2, 3].map((i) => (
          <span key={i} className="h-[6px] w-px border-r border-[#8ca3dd]" />
        ))}
      </div>
    </div>
    <button aria-label="Scroll right" className="flex h-[15px] w-[15px] shrink-0 items-center justify-center rounded-[2px] border border-white bg-[#c3d3fd]">
      <Icon size={10} smooth><path d="M5 2l6 6-6 6" stroke="#4d6185" strokeWidth="3" /></Icon>
    </button>
    <div className="flex w-[175px] shrink-0 items-center justify-between pr-[3px] pl-[2px]">
      <Sep />
      <button aria-label="Refresh" className="flex w-4 justify-center">
        <Icon size={12}><path d="M4 7V4h7M12 9v3H5M9 1l3 3-3 3zM7 9l-3 3 3 3z" strokeWidth="1.300" /></Icon>
      </button>
      <button aria-label="Periodicity" className="w-4 text-center text-[11px] leading-none">D</button>
      <Sep />
      <button aria-label="Rescale vertically" className="flex w-4 justify-center">
        <Icon size={12}><path d="M8 0l4 5H4zM8 16l4-5H4zM6.500 4h3v8h-3z" fill="#000" stroke="none" /></Icon>
      </button>
      <button aria-label="Move" className="flex w-4 justify-center">
        <Icon size={12}><path d="M8 1v14M1 8h14M6 3l2-2 2 2M6 13l2 2 2-2M3 6L1 8l2 2M13 6l2 2-2 2" strokeWidth="1.300" /></Icon>
      </button>
      <button aria-label="Zoom out" className="flex w-4 justify-center">
        <Icon size={12} smooth><circle cx="8" cy="8" r="6" strokeWidth="1.500" /><path d="M5 8h6" strokeWidth="2" /></Icon>
      </button>
      <button aria-label="Zoom in" className="flex w-4 justify-center">
        <Icon size={12} smooth><circle cx="8" cy="8" r="6" strokeWidth="1.500" /><path d="M5 8h6M8 5v6" strokeWidth="2" /></Icon>
      </button>
      <Sep />
      <button aria-label="Previous security" className="flex w-4 justify-center">
        <Icon size={12}><path d="M11 1v14L4 8z" fill="#000" stroke="none" /></Icon>
      </button>
      <button aria-label="Next security" className="flex w-4 justify-center">
        <Icon size={12}><path d="M5 1v14l7-7z" fill="#000" stroke="none" /></Icon>
      </button>
      <button aria-label="Choose security" className="flex w-4 justify-center">
        <Icon size={12}><path d="M2 2h12v12H2zM2 5h12M4 8h8M4 11h8" strokeWidth="1.300" /></Icon>
      </button>
    </div>
  </div>
);

const ChartWindow = () => (
  <main className="flex min-w-0 flex-1 flex-col">
    <div className="mr-[2px] flex min-h-0 flex-1 flex-col border-l border-black">
      <div className="flex h-5 shrink-0 items-center border-t border-b border-black bg-[#7b94dd] pr-[2px] pl-[2px] font-bold shadow-[inset_0_1px_0_#d8d5c6,inset_0_-2px_0_#c9c6b8]">
        <span className="mr-[2px] h-[11px] w-[14px] shrink-0 border border-black bg-white" />
        <span className="mr-1 whitespace-pre text-[#d7e2fa]">TITAN   500114</span>
        <span className="truncate text-[#2fc24b]">(3,044.95, 3,088.00, 2,966.60, 3,046.15, +9.94995)</span>
        <div className="ml-auto flex gap-[3px]">
          <button aria-label="Maximize" className="flex h-[13px] w-[14px] items-center justify-center border border-white border-r-[#55534a] border-b-[#55534a] bg-[#ece9d8]">
            <Icon size={10}><path d="M2 2h12v12H2zM2 4h12" strokeWidth="2" /></Icon>
          </button>
          <button aria-label="Close window" className="flex h-[13px] w-[14px] items-center justify-center border border-white border-r-[#55534a] border-b-[#55534a] bg-[#ece9d8]">
            <Icon size={10} smooth><path d="M2 2l12 12M14 2L2 14" strokeWidth="2.500" /></Icon>
          </button>
        </div>
      </div>
      <div className="grid min-h-0 flex-1 grid-cols-[51px_minmax(0,1fr)_51px] grid-rows-[minmax(0,433fr)_4px_minmax(0,152fr)]">
        <PriceAxis side="left" />
        <PricePlot />
        <PriceAxis side="right" />
        <div className="col-span-3 border-t border-b border-t-[#ece9d8] border-b-black bg-[#aca899]" />
        <RsiAxis />
        <RsiPlot />
        <VolumeAxis />
      </div>
    </div>
    <div className="flex h-[21px] shrink-0 pr-[52px] pl-[51px]">
      <DateAxis />
    </div>
    <ScrollRow />
  </main>
);

const Firefox = () => (
  <Icon>
    <path d="M2.500.500h8l3 3v12h-11z" fill="#fff" stroke="#b4b1a4" />
    <circle cx="8" cy="8.500" r="4" fill="#d86a20" stroke="none" />
    <circle cx="8" cy="7.500" r="2.200" fill="#3858a8" stroke="none" />
  </Icon>
);

const TemplateIcon = ({ children }: { children: React.ReactNode }) => (
  <Icon>
    <path d="M5 3.500H2.500v9h11v-9H12" />
    <path d="M3 11l3-2 2 1 3-3" stroke="#a01030" />
    {children}
  </Icon>
);

const LineBar = () => (
  <div className="flex h-[30px] shrink-0 items-center border-t border-b border-t-[#c9c6b4] border-b-[#8f8c7c] pl-[2px]">
    <Grip />
    <span className="w-2 shrink-0" />
    <Combo label="Line style" value="" className="w-[130px]">
      <span className="pointer-events-none absolute top-[9px] left-[15px] h-px w-[81px] bg-black" />
    </Combo>
    <Sep />
    <Combo label="Line weight" value="" className="w-[100px]">
      <span className="pointer-events-none absolute top-[9px] left-[11px] h-px w-[60px] bg-black" />
    </Combo>
    <span className="w-[6px] shrink-0" />
    <BandEnd />
    <span className="w-[2px] shrink-0" />
    <Grip />
    <div className="ml-[10px] grid shrink-0 grid-cols-8 gap-x-px gap-y-px">
      {SWATCHES.map((color, i) => (
        <button key={color} aria-label={`Color ${i + 1}`} className={clsx("h-[9px] w-[9px] border", color, i === 5 ? "border-white" : "border-[#aca899]")} />
      ))}
    </div>
    <button aria-label="More colors" className="ml-[2px] flex w-3 shrink-0 justify-center">
      <svg width="5" height="3" viewBox="0 0 5 3" aria-hidden="true"><path d="M0 0h5L2.500 3z" /></svg>
    </button>
    <span className="w-[6px] shrink-0" />
    <BandEnd />
    <span className="w-[2px] shrink-0" />
    <Grip />
    <span className="w-[9px] shrink-0" />
    <ToolButton label="Research"><Firefox /></ToolButton>
    <ToolButton label="News"><Firefox /></ToolButton>
    <ToolButton label="Template 1">
      <TemplateIcon><path d="M7 3.500l1.500-1v6M7 8.500h3" /></TemplateIcon>
    </ToolButton>
    <ToolButton label="Template 2">
      <TemplateIcon><path d="M7 2.500h3v3L7 8.500h4" /></TemplateIcon>
    </ToolButton>
    <span className="w-[6px] shrink-0" />
    <BandEnd />
    <span className="w-[2px] shrink-0" />
    <Grip />
    <input
      aria-label="Symbol"
      readOnly
      value="TITAN1008"
      className="ml-[9px] h-[19px] w-[62px] shrink-0 border border-[#8f8c7c] border-r-white border-b-white bg-transparent px-px"
    />
    <span className="w-[2px] shrink-0" />
    <Sep />
    <Combo label="Quantity" value="" className="w-[80px]" />
    <Sep />
    <Combo label="Vendor" value="<No Vendor>" className="w-[150px]" />
    <Sep />
    <button disabled className="h-5 w-[63px] shrink-0 rounded-[3px] border border-[#cfccbd] bg-[#f3f2ea] text-[#a8a596]">
      Trade
    </button>
    <span className="w-[7px] shrink-0" />
    <BandEnd />
  </div>
);

const StatusBar = () => (
  <footer className="flex h-[18px] shrink-0 items-end justify-between border-t border-white bg-linear-to-b from-[#f3f1e4] to-[#dedac6] pb-px pl-px leading-[14px]">
    <span>For Help, press F1</span>
    <div className="flex h-[14px] items-center">
      <span className="w-16 border-r border-[#c9c6b4]">05/28/2010</span>
      <span className="h-full w-[58px] border-r border-[#c9c6b4]" />
      <span className="w-[72px] border-r border-[#c9c6b4] pl-1">1,876.45</span>
      <span className="h-full w-[25px] border-r border-[#c9c6b4]" />
      <span className="w-[43px] border-r border-[#c9c6b4] pl-1">12:25</span>
      <span className="w-6 border-r border-[#c9c6b4] text-center text-[13px] font-bold text-[#0c8a1c]">$</span>
      <span className="h-full w-[29px] border-r border-[#c9c6b4]" />
    </div>
  </footer>
);

const TaskBar = () => (
  <div className="flex h-[30px] shrink-0 items-stretch bg-linear-to-b from-[#3f8cf3] via-[#245edb] via-15% to-[#1f50c0] text-white">
    <button className="flex w-[97px] shrink-0 items-center gap-[5px] rounded-r-[10px] bg-linear-to-b from-[#6cb96c] via-[#388f38] via-25% to-[#2f7d2f] pl-[10px] shadow-[2px_0_3px_#14388f]">
      <svg width="19" height="19" viewBox="0 0 19 19" aria-hidden="true">
        <path d="M3 3c2-2 4-1.500 6 0L7.500 9c-2-1.500-4-1.500-6 0z" fill="#f0592a" />
        <path d="M10 3.500c2 1.500 4 1.500 6.500 0L15 9.500c-2 1.500-4 1.500-6.500 0z" fill="#8ccf3f" />
        <path d="M1.500 10c2-1.500 4-1.500 6 0L6 16c-2-1.500-4-1.500-6 0z" fill="#5b9bf0" />
        <path d="M8.500 10.500c2 1.500 4 1.500 6.500 0l-1.500 6c-2 1.500-4 1.500-6.500 0z" fill="#fbd03c" />
      </svg>
      <span className="font-['Open_Sans',sans-serif] text-[17px] leading-none font-bold italic">start</span>
    </button>
    <div className="flex min-w-0 flex-1 items-center pl-[9px]">
      <button className="flex h-[25px] w-[160px] min-w-0 items-center gap-1 rounded-[2px] border border-[#123a94] bg-[#1d4fb4] pl-[9px]">
        <Spider size={16} />
        <span className="truncate">MetaStock Profession...</span>
      </button>
      <button className="flex h-[25px] w-[159px] min-w-0 items-center gap-1 rounded-[2px] border border-[#5a9bff] bg-[#3a81f3] pl-[9px]">
        <Icon smooth>
          <path d="M1.500 13V4c0-1 .5-1.500 1.500-1.500h3L7.500 4H13c1 0 1.500.500 1.500 1.500V7" fill="#e8b84a" stroke="#a87820" />
          <path d="M1.500 13.500V6.500h13v7z" fill="#ffe890" stroke="#a87820" />
        </Icon>
        <span className="truncate">Technical Analysis</span>
      </button>
    </div>
    <div className="flex shrink-0 items-center gap-[9px] pr-[14px]">
      <button aria-label="Language help" className="flex h-[13px] w-[13px] items-center justify-center border border-black bg-[#fffbe0] text-[11px] leading-none font-bold text-black">
        ?
      </button>
      <Icon size={14}>
        <path d="M2 4h7v4H2zM6 3V0h7v4h-3" stroke="#fff" strokeWidth="1.200" />
        <path d="M4 12h7l-3.500 4z" fill="#fff" stroke="none" />
      </Icon>
    </div>
    <div className="flex w-[165px] shrink-0 items-center bg-linear-to-b from-[#3cb6f8] via-[#139aea] via-15% to-[#1183dc]">
      <button aria-label="Show hidden icons" className="-ml-2 flex size-4 shrink-0 items-center justify-center rounded-full bg-[#2f80e8] shadow-[inset_1px_1px_2px_#9fd0ff]">
        <Icon size={10} smooth><path d="M10 2L4 8l6 6" stroke="#fff" strokeWidth="3" /></Icon>
      </button>
      <div className="ml-[2px] flex gap-[3px]">
        <Icon smooth>
          <path d="M8 1l6 2v5c0 4-3 6-6 7-3-1-6-3-6-7V3z" fill="#f7d52c" stroke="#fff8c0" />
          <path d="M8 4v5M8 11v2" strokeWidth="2" />
        </Icon>
        <Icon smooth>
          <path d="M8 1l6 2v5c0 4-3 6-6 7-3-1-6-3-6-7V3z" fill="#c01c1c" stroke="#f8c0c0" />
          <path d="M5.500 5l5 5M10.500 5l-5 5" stroke="#fff" strokeWidth="1.800" />
        </Icon>
        <Icon smooth>
          <path d="M6 1h8v6H6z" fill="#203a8c" stroke="#9ab0dc" />
          <path d="M1 6h8v6H1z" fill="#203a8c" stroke="#9ab0dc" />
          <path d="M3 14h5" stroke="#c8d0e0" strokeWidth="2" />
          <path d="M9 8l6 7M15 8l-6 7" stroke="#e02020" strokeWidth="2" />
        </Icon>
        <Icon smooth>
          <path d="M1 1h14v14H1z" fill="#9aa09a" stroke="none" />
          <path d="M3 1v14M13 1L4 9l5 6" stroke="#fff" strokeWidth="1.500" />
          <path d="M10 6l5.500 9h-11z" fill="#f7d52c" stroke="#6a5a10" />
          <path d="M10 9v3M10 13v1" />
        </Icon>
        <span className="flex size-4 items-center justify-center rounded-full border border-[#e8e4dc] bg-[#f08c1c] text-[10px] leading-none font-bold text-black">1</span>
      </div>
      <time className="ml-1 whitespace-nowrap">12:27 PM</time>
    </div>
  </div>
);

export default function App() {
  return (
    <div className="flex h-screen min-h-[640px] flex-col overflow-hidden bg-[#ece9d8] font-['DejaVu_Sans_Condensed',sans-serif] text-[11px] text-black">
      <TitleBar />
      <MenuBar />
      <StandardBar />
      <div className="flex min-h-0 flex-1">
        <LeftTools />
        <DataWindow />
        <ChartWindow />
      </div>
      <LineBar />
      <StatusBar />
      <TaskBar />
    </div>
  );
}
